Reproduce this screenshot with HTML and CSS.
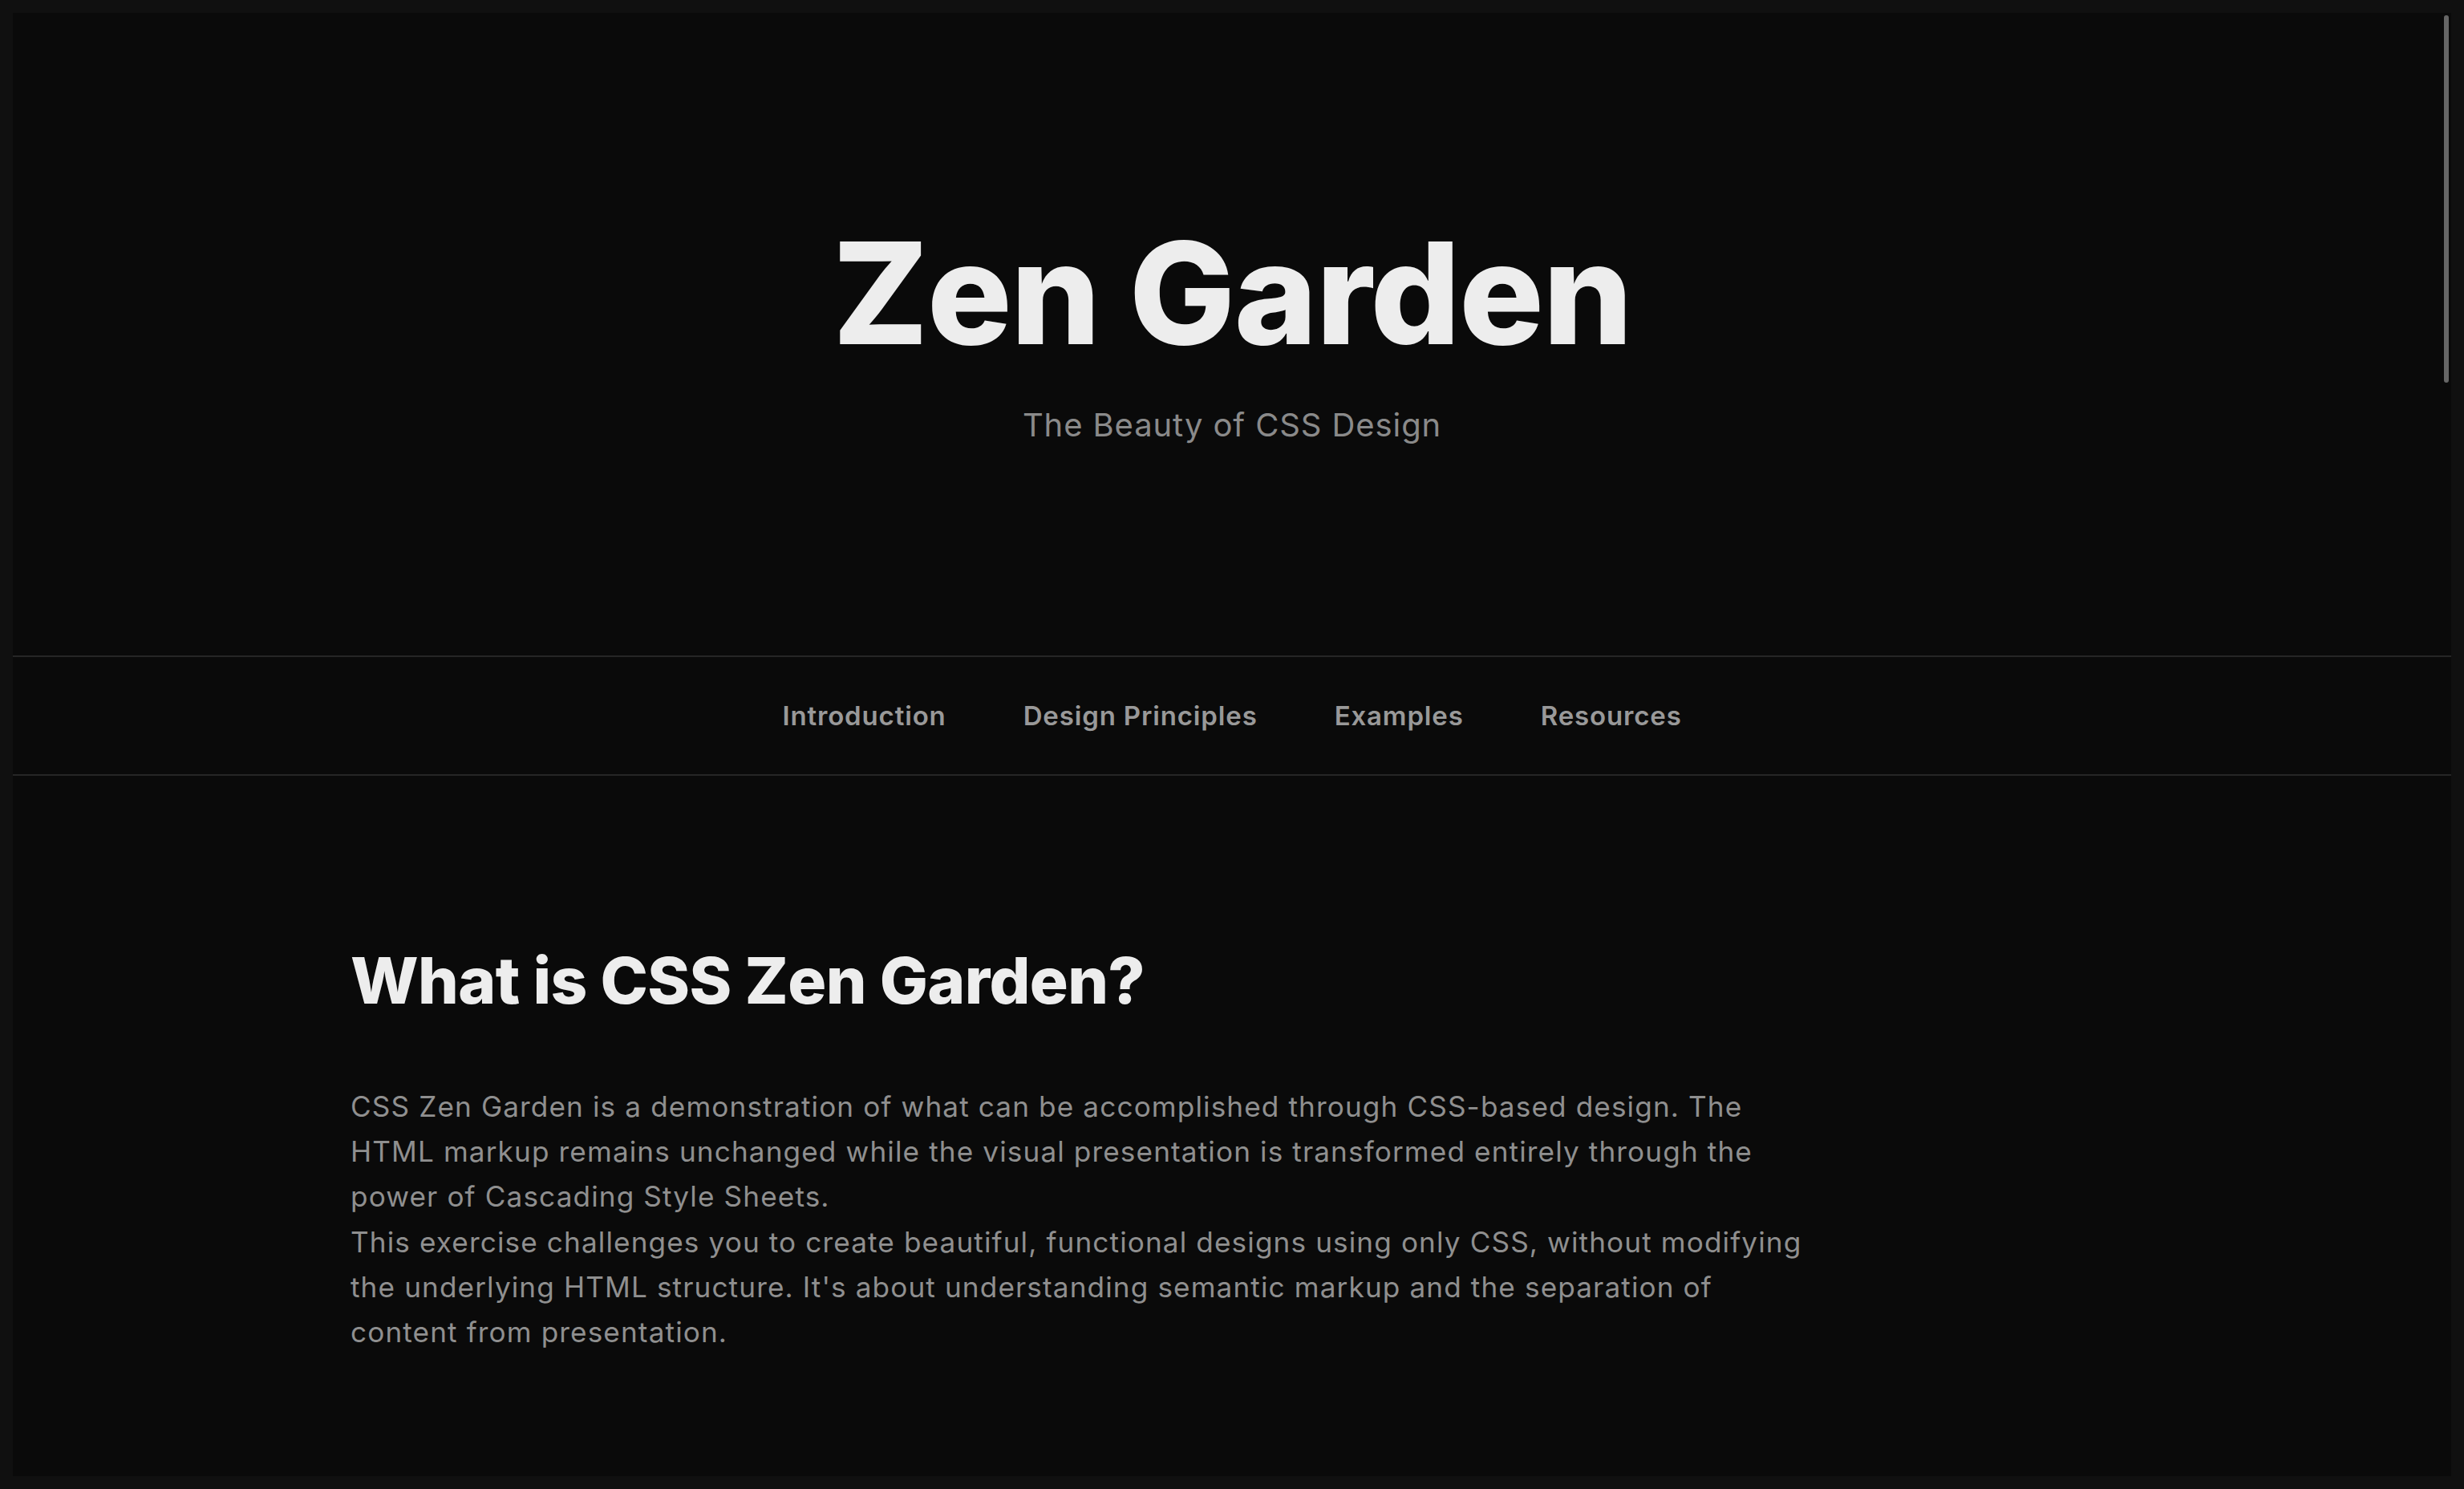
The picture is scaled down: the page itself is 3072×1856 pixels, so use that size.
FILE: index.html
```html
<!DOCTYPE html>
<html lang="en">
<head>
<meta charset="utf-8">
<title>Zen Garden</title>
<link rel="stylesheet" href="styles.css">
</head>
<body>
<div class="page">
  <header class="hero">
    <h1 class="hero-title">Zen Garden</h1>
    <p class="hero-subtitle">The Beauty of CSS Design</p>
  </header>
  <nav class="main-nav">
    <a class="nav-link" href="#intro">Introduction</a>
    <a class="nav-link" href="#principles">Design Principles</a>
    <a class="nav-link" href="#examples">Examples</a>
    <a class="nav-link" href="#resources">Resources</a>
  </nav>
  <main class="content">
    <section class="section" id="intro">
      <h2 class="section-title">What is CSS Zen Garden?</h2>
      <div class="section-body">
        <p class="section-text">CSS Zen Garden is a demonstration of what can be accomplished through CSS-based design. The HTML markup remains unchanged while the visual presentation is transformed entirely through the power of Cascading Style Sheets.</p>
        <p class="section-text">This exercise challenges you to create beautiful, functional designs using only CSS, without modifying the underlying HTML structure. It's about understanding semantic markup and the separation of content from presentation.</p>
      </div>
    </section>
  </main>
</div>
<div class="scroll-thumb" aria-hidden="true"></div>
</body>
</html>
```
FILE: styles.css
```css
html, body {
  background: #101010;
}
body {
  margin: 16px;
  font-family: Inter, "Noto Sans", "Liberation Sans", sans-serif;
  color: #8f8f8f;
}
.page {
  height: calc(100vh - 32px);
  overflow: hidden;
  background: #0a0a0a;
}
.scroll-thumb {
  position: fixed;
  top: 19px;
  right: 19px;
  width: 6px;
  height: 458px;
  border-radius: 3px;
  background: #666;
}
.hero {
  padding: 252px 0 257px;
  text-align: center;
}
.hero-title {
  margin: 0;
  font-size: 176px;
  line-height: 1.1;
  font-weight: 800;
  letter-spacing: -0.008em;
  color: #ededed;
}
.hero-subtitle {
  margin: 38px 0 0;
  font-size: 40px;
  line-height: 1.5;
  font-weight: 400;
  letter-spacing: 0.9px;
  color: #8a8a8a;
}
.main-nav {
  display: flex;
  justify-content: center;
  gap: 96px;
  padding: 49px 0;
  border-top: 2px solid #262626;
  border-bottom: 2px solid #262626;
}
.nav-link {
  font-size: 33px;
  line-height: 48px;
  font-weight: 600;
  letter-spacing: 0.85px;
  color: #999;
  text-decoration: none;
}
.content {
  padding: 207px 0 0;
}
.section {
  max-width: 2198px;
  margin: 0 auto;
}
.section-title {
  margin: 0 0 81px;
  font-size: 80px;
  line-height: 1.2;
  font-weight: 800;
  letter-spacing: -0.008em;
  color: #ededed;
}
.section-body {
  max-width: 1825px;
}
.section-text {
  margin: 0;
  font-size: 35.2px;
  line-height: 1.6;
  letter-spacing: 1.1px;
  color: #8f8f8f;
}
```
